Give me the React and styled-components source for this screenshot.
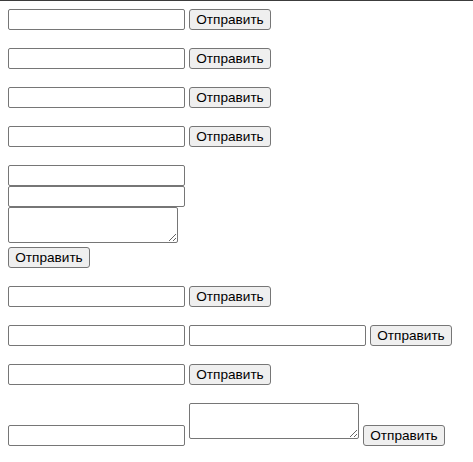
import React from "react";
import styled, { createGlobalStyle } from "styled-components";

const GlobalStyle = createGlobalStyle`
  html, body {
    margin: 0;
    background: #fff;
  }
  body {
    font-family: "Liberation Sans", Arial, sans-serif;
  }
`;

const Page = styled.div`
  border-top: 1px solid #3c3c3c;
  padding: 8px 8px 0;
  display: flex;
  flex-direction: column;
  gap: 18px;
`;

const Row = styled.form`
  display: flex;
  align-items: ${(p) => (p.$bottom ? "flex-end" : "flex-start")};
  gap: 4px;
  margin: 0;
`;

const Stack = styled.form`
  display: flex;
  flex-direction: column;
  align-items: flex-start;
  margin: 0;
`;

const Field = styled.input`
  box-sizing: border-box;
  width: 177px;
  height: 21px;
  padding: 1px 2px;
  border: 1px solid #767676;
  border-radius: 2px;
  background: #fff;
  font: 13.33px "Liberation Sans", Arial, sans-serif;
  outline: none;
`;

const Area = styled.textarea`
  box-sizing: border-box;
  width: 170px;
  height: 36px;
  padding: 2px;
  border: 1px solid #767676;
  border-radius: 2px;
  background: #fff;
  font: 13.33px "Liberation Mono", monospace;
  margin: ${(p) => p.$gap || "0"};
`;

const Button = styled.button`
  box-sizing: border-box;
  width: 82px;
  height: 21px;
  padding: 1px 6px;
  border: 1px solid #767676;
  border-radius: 3px;
  background: #efefef;
  color: #000;
  font: 13.6px "Liberation Sans", Arial, sans-serif;
  line-height: 17px;
  white-space: nowrap;
`;

const label = "Отправить";

const SimpleForm = () => (
  <Row onSubmit={(e) => e.preventDefault()}>
    <Field type="text" />
    <Button type="submit">{label}</Button>
  </Row>
);

const App = () => {
  return (
    <>
      <GlobalStyle />
      <Page>
        <SimpleForm />
        <SimpleForm />
        <SimpleForm />
        <SimpleForm />
        <Stack onSubmit={(e) => e.preventDefault()}>
          <Field type="text" />
          <Field type="text" />
          <Area $gap="0 0 4px" />
          <Button type="submit">{label}</Button>
        </Stack>
        <SimpleForm />
        <Row onSubmit={(e) => e.preventDefault()}>
          <Field type="text" />
          <Field type="text" />
          <Button type="submit">{label}</Button>
        </Row>
        <SimpleForm />
        <Row $bottom onSubmit={(e) => e.preventDefault()}>
          <Field type="text" />
          <Area $gap="0 0 7px" />
          <Button type="submit">{label}</Button>
        </Row>
      </Page>
    </>
  );
};

export default App;
